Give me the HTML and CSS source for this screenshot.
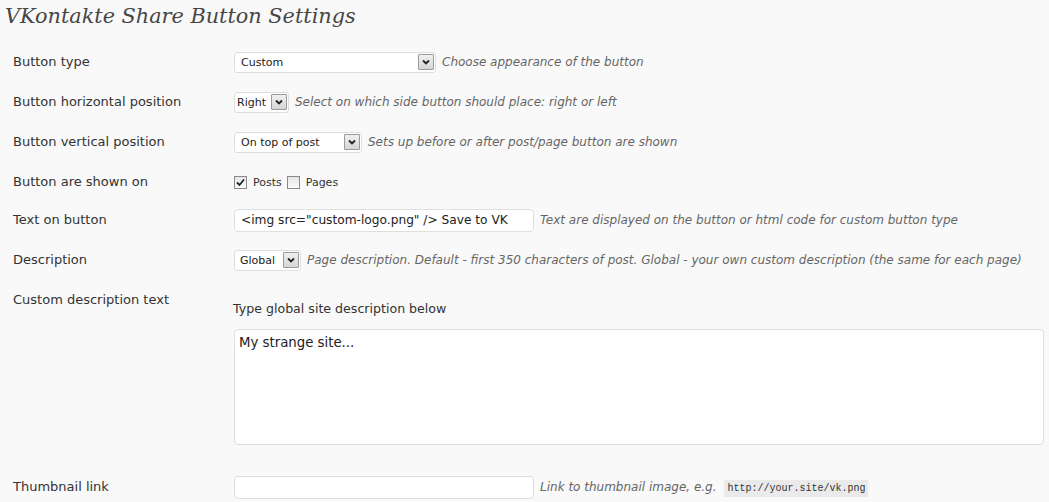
FILE: index.html
```html
<!DOCTYPE html>
<html>
<head>
<meta charset="utf-8">
<link rel="stylesheet" href="styles.css">
</head>
<body>
<div class="wrap">
  <h2 class="title">VKontakte Share Button Settings</h2>
  <div class="form">
    <div class="row r40">
      <div class="label">Button type</div>
      <div class="field">
        <span class="select w-custom"><span class="val">Custom</span><span class="arrow"><svg width="8" height="6" viewBox="0 0 8 6"><path d="M1 1.5 L4 4.5 L7 1.5" fill="none" stroke="#222" stroke-width="1.8"/></svg></span></span>
        <span class="desc">Choose appearance of the button</span>
      </div>
    </div>
    <div class="row r40">
      <div class="label">Button horizontal position</div>
      <div class="field">
        <span class="select w-right"><span class="val">Right</span><span class="arrow"><svg width="8" height="6" viewBox="0 0 8 6"><path d="M1 1.5 L4 4.5 L7 1.5" fill="none" stroke="#222" stroke-width="1.8"/></svg></span></span>
        <span class="desc">Select on which side button should place: right or left</span>
      </div>
    </div>
    <div class="row r40">
      <div class="label">Button vertical position</div>
      <div class="field">
        <span class="select w-top"><span class="val">On top of post</span><span class="arrow"><svg width="8" height="6" viewBox="0 0 8 6"><path d="M1 1.5 L4 4.5 L7 1.5" fill="none" stroke="#222" stroke-width="1.8"/></svg></span></span>
        <span class="desc">Sets up before or after post/page button are shown</span>
      </div>
    </div>
    <div class="row r40">
      <div class="label">Button are shown on</div>
      <div class="field">
        <span class="check"><svg width="11" height="11" viewBox="0 0 11 11"><path d="M2 5.5 L4.5 8 L9 2.5" fill="none" stroke="#222" stroke-width="1.8"/></svg></span><span class="cblabel">Posts</span>
        <span class="check"></span><span class="cblabel">Pages</span>
      </div>
    </div>
    <div class="row r36">
      <div class="label">Text on button</div>
      <div class="field">
        <span class="input"><span class="ival">&lt;img src="custom-logo.png" /&gt; Save to VK</span></span>
        <span class="desc">Text are displayed on the button or html code for custom button type</span>
      </div>
    </div>
    <div class="row r44">
      <div class="label">Description</div>
      <div class="field">
        <span class="select w-global"><span class="val">Global</span><span class="arrow"><svg width="8" height="6" viewBox="0 0 8 6"><path d="M1 1.5 L4 4.5 L7 1.5" fill="none" stroke="#222" stroke-width="1.8"/></svg></span></span>
        <span class="desc">Page description. Default - first 350 characters of post. Global - your own custom description (the same for each page)</span>
      </div>
    </div>
    <div class="row top">
      <div class="label">Custom description text</div>
      <div class="field col">
        <p class="hint">Type global site description below</p>
        <div class="textarea">My strange site...</div>
      </div>
    </div>
    <div class="row r42">
      <div class="label">Thumbnail link</div>
      <div class="field">
        <span class="input"></span>
        <span class="desc">Link to thumbnail image, e.g. <code>http://your.site/vk.png</code></span>
      </div>
    </div>
  </div>
</div>
</body>
</html>
```

FILE: styles.css
```css
html, body {
  margin: 0;
  padding: 0;
  background: #f9f9f9;
  overflow: hidden;
}
body {
  font-family: "DejaVu Sans", Verdana, sans-serif;
  font-size: 13px;
  color: #333;
}
.wrap {
  padding: 0 0 0 5px;
}
.title {
  margin: 0;
  height: 42px;
  padding-top: 1px;
  box-sizing: border-box;
  font-family: "DejaVu Serif", Georgia, serif;
  font-style: italic;
  font-weight: normal;
  font-size: 20.8px;
  line-height: 30px;
  color: #464646;
}
.form {
  padding-left: 8px;
}
.row {
  display: grid;
  grid-template-columns: 221px 1fr;
  align-items: center;
}
.r40 { height: 40px; }
.r36 { height: 36px; }
.r44 { height: 44px; }
.r42 { height: 42px; }
.row.top {
  align-items: start;
  padding: 10px 0 21px;
}
.label {
  line-height: 16px;
  color: #333;
}
.field {
  display: flex;
  align-items: center;
  white-space: nowrap;
}
.field.col {
  flex-direction: column;
  align-items: stretch;
}
.select {
  display: inline-flex;
  align-items: center;
  justify-content: space-between;
  box-sizing: border-box;
  height: 21px;
  background: #fff;
  border: 1px solid #dfdfdf;
  border-radius: 3px;
  padding: 0 1px 0 6px;
  font-size: 11px;
  color: #222;
}
.select .val {
  overflow: hidden;
}
.w-custom { width: 202px; }
.w-right { width: 55px; padding-left: 2px; }
.w-top { width: 128px; }
.w-global { width: 67px; padding-left: 5px; }
.arrow {
  display: inline-flex;
  align-items: center;
  justify-content: center;
  box-sizing: border-box;
  width: 16px;
  height: 16px;
  border: 1px solid #9a9a9a;
  border-radius: 1px;
  background: linear-gradient(#f0f0f0, #d6d6d6);
  flex: none;
}
.desc {
  margin-left: 6px;
  font-style: italic;
  font-size: 12px;
  color: #666;
}
.check {
  display: inline-flex;
  align-items: center;
  justify-content: center;
  box-sizing: border-box;
  width: 13px;
  height: 13px;
  border: 1px solid #8a8a8a;
  background: linear-gradient(#e6e6e6, #fbfbfb);
  flex: none;
}
.cblabel {
  margin-left: 6px;
  margin-right: 5px;
  font-size: 11px;
  color: #333;
}
.input {
  display: inline-flex;
  align-items: center;
  box-sizing: border-box;
  width: 300px;
  height: 23px;
  background: #fff;
  border: 1px solid #dfdfdf;
  border-radius: 4px;
  padding-left: 6px;
  font-size: 12.2px;
  color: #222;
}
.hint {
  margin: 9px 0 0 -1px;
  line-height: 16px;
  font-size: 12.6px;
  color: #333;
}
.textarea {
  margin-top: 12px;
  box-sizing: border-box;
  width: 810px;
  height: 116px;
  background: #fff;
  border: 1px solid #dfdfdf;
  border-radius: 4px;
  padding: 5px 4px;
  line-height: 16px;
  font-size: 13.3px;
  color: #222;
}
code {
  font-family: "Liberation Mono", "DejaVu Sans Mono", monospace;
  font-style: normal;
  font-size: 10px;
  background: #eaeaea;
  padding: 3px 3px;
  margin-left: 4px;
  color: #333;
}
```
